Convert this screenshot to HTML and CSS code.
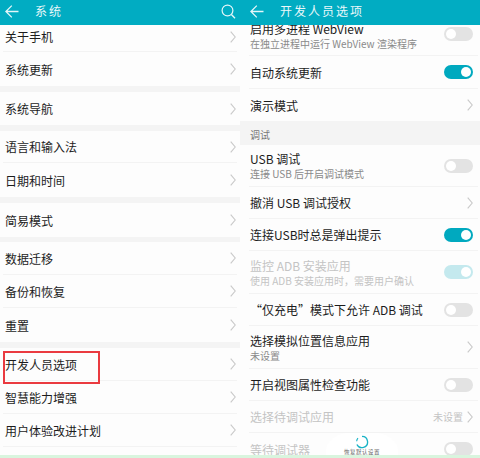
FILE: index.html
```
<!DOCTYPE html>
<html lang="zh-CN">
<head>
<meta charset="utf-8">
<title>开发人员选项</title>
<link rel="stylesheet" href="styles.css">
</head>
<body>
<svg class="defs" width="0" height="0" aria-hidden="true">
  <symbol id="chev" viewBox="0 0 6 12"><path d="M.7.7 5.2 6 .7 11.3" fill="none" stroke="#c9c9c9" stroke-width="1.1"/></symbol>
  <symbol id="back" viewBox="0 0 14 13"><path d="M13.5 6.5H1M6.8.6 .9 6.5l5.9 5.9" fill="none" stroke="#e4f6f9" stroke-width="1.3"/></symbol>
</svg>
<main class="screen">
  <section class="panel">
    <header class="bar bar-left">
      <svg class="back" viewBox="0 0 14 13"><use href="#back"/></svg>
      <span class="bar-title">系统</span>
      <svg class="search" viewBox="0 0 15 15"><circle cx="6.5" cy="6.5" r="5.4" fill="none" stroke="#e4f6f9" stroke-width="1.2"/><path d="m10.4 10.5 3.6 3.8" stroke="#e4f6f9" stroke-width="1.3"/></svg>
    </header>
    <div class="list">
      <div class="row h27 first"><span>关于手机</span><svg class="chev"><use href="#chev"/></svg></div>
      <div class="row h34 end"><span>系统更新</span><svg class="chev"><use href="#chev"/></svg></div>
      <div class="gap"></div>
      <div class="row end"><span>系统导航</span><svg class="chev"><use href="#chev"/></svg></div>
      <div class="gap"></div>
      <div class="row h32"><span>语言和输入法</span><svg class="chev"><use href="#chev"/></svg></div>
      <div class="row h34 end"><span>日期和时间</span><svg class="chev"><use href="#chev"/></svg></div>
      <div class="gap"></div>
      <div class="row h34 end"><span>简易模式</span><svg class="chev"><use href="#chev"/></svg></div>
      <div class="gap gap5"></div>
      <div class="row"><span>数据迁移</span><svg class="chev"><use href="#chev"/></svg></div>
      <div class="row"><span>备份和恢复</span><svg class="chev"><use href="#chev"/></svg></div>
      <div class="row h34 end"><span>重置</span><svg class="chev"><use href="#chev"/></svg></div>
      <div class="gap"></div>
      <div class="row marked"><span>开发人员选项</span><svg class="chev"><use href="#chev"/></svg><i class="mark"></i></div>
      <div class="row"><span>智慧能力增强</span><svg class="chev"><use href="#chev"/></svg></div>
      <div class="row"><span>用户体验改进计划</span><svg class="chev"><use href="#chev"/></svg></div>
    </div>
  </section>
  <section class="panel panel-right">
    <header class="bar bar-right">
      <svg class="back" viewBox="0 0 14 13"><use href="#back"/></svg>
      <span class="bar-title">开发人员选项</span>
    </header>
    <div class="list">
      <div class="row two clipped"><div class="text"><span>启用多进程 WebView</span><small>在独立进程中运行 WebView 渲染程序</small></div><i class="switch"></i></div>
      <div class="row"><span>自动系统更新</span><i class="switch on"></i></div>
      <div class="row h32 end"><span>演示模式</span><svg class="chev"><use href="#chev"/></svg></div>
      <div class="section">调试</div>
      <div class="row two h42"><div class="text"><span>USB 调试</span><small>连接 USB 后开启调试模式</small></div><i class="switch"></i></div>
      <div class="row h32"><span>撤消 USB 调试授权</span><svg class="chev"><use href="#chev"/></svg></div>
      <div class="row h32"><span>连接USB时总是弹出提示</span><i class="switch on"></i></div>
      <div class="row two off"><div class="text"><span>监控 ADB 安装应用</span><small>使用 ADB 安装应用时，需要用户确认</small></div><i class="switch on dim"></i></div>
      <div class="row h32"><span>“仅充电”模式下允许 ADB 调试</span><i class="switch"></i></div>
      <div class="row two"><div class="text"><span>选择模拟位置信息应用</span><small>未设置</small></div><svg class="chev"><use href="#chev"/></svg></div>
      <div class="row h32"><span>开启视图属性检查功能</span><i class="switch"></i></div>
      <div class="row h32 off"><span>选择待调试应用</span><em class="value">未设置</em><svg class="chev"><use href="#chev"/></svg></div>
      <div class="row h32 off end"><span>等待调试器</span><i class="switch"></i></div>
    </div>
    <aside class="restore">
      <svg class="spin" viewBox="0 0 16 16"><path d="M8 1.6A6.4 6.4 0 1 1 2.2 10.8" fill="none" stroke="#19b3c6" stroke-width="1.5"/><path d="M1.9 7.2 A6.4 6.4 0 0 1 3.4 3.6" fill="none" stroke="#19b3c6" stroke-width="1.3"/></svg>
      <span>恢复默认设置</span>
    </aside>
  </section>
</main>
<div class="strip"></div>
</body>
</html>
```
FILE: styles.css
```
* { box-sizing: border-box; }
html, body { margin: 0; padding: 0; }
body {
  width: 480px;
  height: 458px;
  overflow: hidden;
  background: #fdfdfd;
  font-family: "Noto Sans CJK SC", "Liberation Sans", sans-serif;
  color: #1c1c1c;
}
.defs { display: block; height: 0; }
.screen { display: grid; grid-template-columns: 240px 240px; height: 455px; }
.panel { position: relative; display: flex; flex-direction: column; height: 455px; overflow: hidden; background: #fdfdfd; }
.bar { flex: none; height: 25px; display: flex; align-items: center; background: #01acc2; }
.bar-left { padding: 0 4px 3px 5px; }
.bar-right { padding: 0 0 3px 10px; }
.back { width: 14px; height: 13px; flex: none; }
.bar-title { font-size: 12px; letter-spacing: 2px; line-height: 14px; color: #e9f8fa; margin-left: 16px; }
.search { width: 15px; height: 15px; margin-left: auto; }
.list { flex: 1; min-height: 0; overflow: hidden; display: flex; flex-direction: column; }
.row {
  position: relative;
  flex: none;
  height: 33px;
  margin: 0 3px;
  padding: 0 1px 0 2px;
  display: flex;
  align-items: center;
  justify-content: space-between;
  border-bottom: 1px solid #f3f3f3;
  font-size: 12px;
  line-height: 15px;
  white-space: nowrap;
}
.row.end { border-bottom: 0; }
.h27 { height: 27px; }
.first { padding-bottom: 3px; }
.h32 { height: 32px; }
.h34 { height: 34px; }
.h42 { height: 42px; }
.gap { flex: none; height: 6px; background: #f4f4f4; }
.gap5 { height: 5px; }
.chev { width: 6px; height: 12px; flex: none; }
.marked { overflow: visible; }
.mark { position: absolute; left: 0; top: 3px; width: 97px; height: 33px; border: 2px solid #ea3a40; }
.panel-right .row { margin: 0 2px 0 9px; padding: 0 5px 0 1px; }
.two { height: 43px; }
.two.h42 { height: 42px; }
.two .text { padding-top: 1px; }
.clipped { margin-top: -12px !important; }
.clipped .text { padding-top: 4px; }
.text { display: flex; flex-direction: column; gap: 1px; }
.text small { font-size: 10px; line-height: 14px; color: #8a8a8a; }
.off span, .off small, .off .value { color: #c4c4c4; }
.value { font-style: normal; font-size: 10px; margin-left: auto; margin-right: 4px; }
.switch { position: relative; flex: none; width: 29px; height: 14px; border-radius: 7px; background: #e3e3e3; }
.switch::after { content: ""; position: absolute; left: 2px; top: 2px; width: 10px; height: 10px; border-radius: 50%; background: #fff; }
.switch.on { background: #00a9bf; }
.switch.on::after { left: 17px; }
.switch.dim { background: #c4e9ee; }
.section {
  flex: none;
  height: 24px;
  padding: 7px 0 0 10px;
  background: #f4f4f4;
  font-size: 10px;
  line-height: 14px;
  color: #777;
}
.restore {
  position: absolute;
  left: 86px;
  top: 433px;
  width: 72px;
  height: 22px;
  border-radius: 24px 24px 0 0 / 18px 18px 0 0;
  background: #fff;
  display: flex;
  flex-direction: column;
  align-items: center;
  padding-top: 2px;
}
.spin { width: 14px; height: 14px; flex: none; }
.restore span { font-size: 5.5px; line-height: 6px; letter-spacing: .5px; color: #666; }
.strip { height: 3px; background: #d9f5de; }
```
